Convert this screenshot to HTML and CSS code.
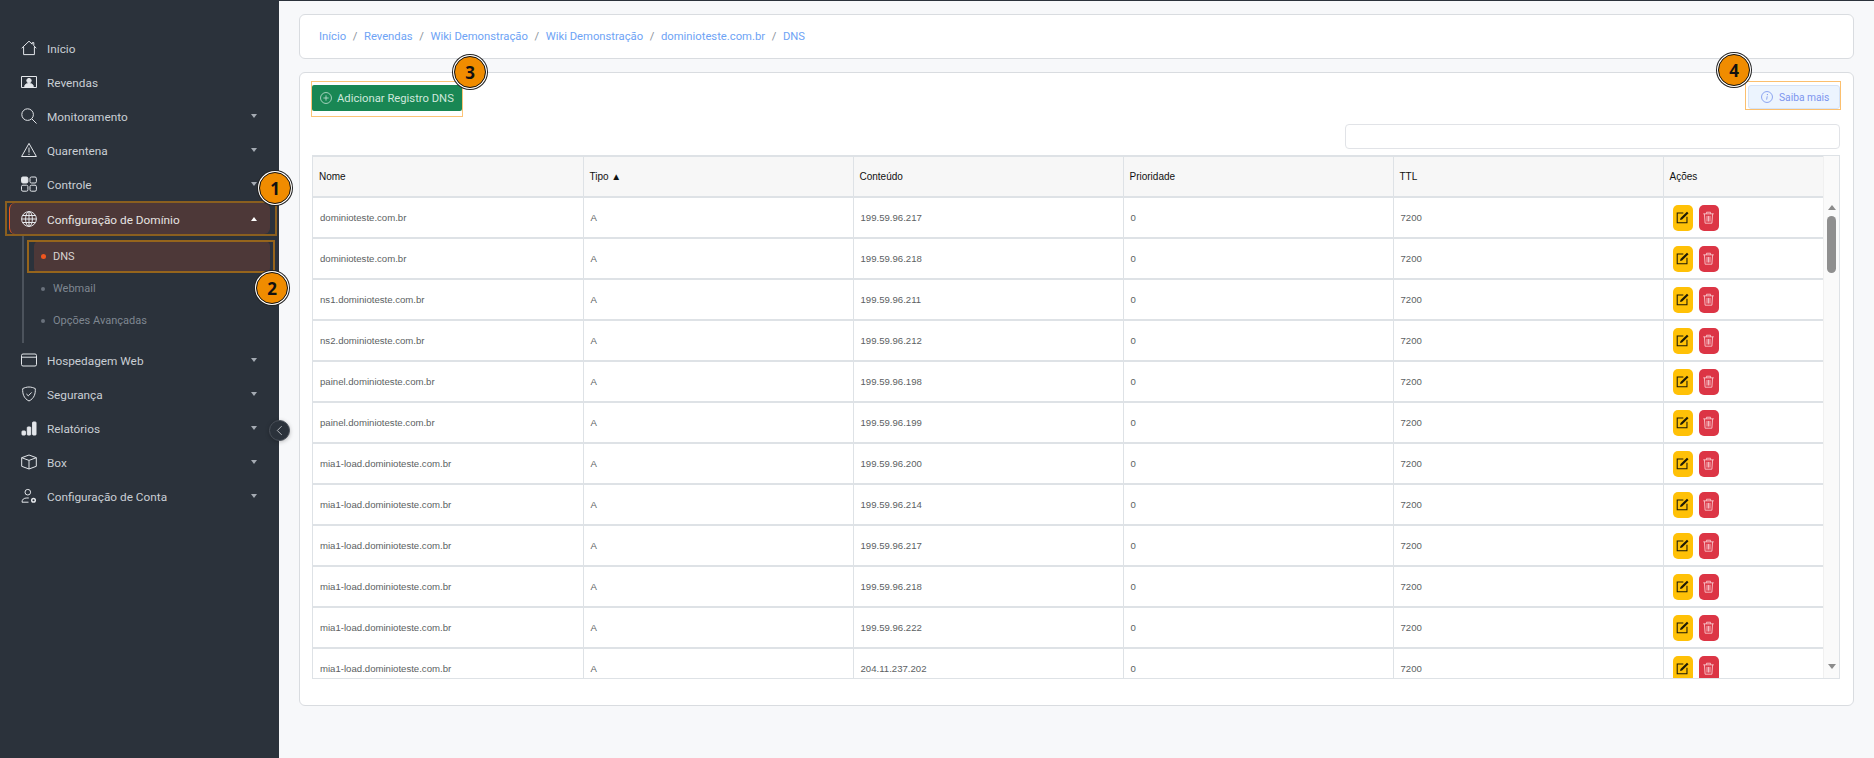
FILE: index.html
```html
<!DOCTYPE html>
<html lang="pt-BR">
<head>
    <meta charset="UTF-8">
    <title>DNS</title>
    <link rel="stylesheet" href="styles.css">
</head>
<body>
    <aside class="sidebar">
        <nav class="menu">
            <a class="menu-item">
                <svg class="icon" viewBox="0 0 16 16"><path d="M.7 8.2 8 1.2l3.2 3V2.6h1.600v3.200l2.500 2.400M2.600 7v7.600h10.800V7"/></svg>
                <span class="label">Início</span>
            </a>
            <a class="menu-item">
                <svg class="icon" viewBox="0 0 16 16"><path d="M.5 2.500h15v11H.5z"/><circle class="solid" cx="8" cy="6.600" r="2.200"/><path class="solid" d="M3.600 12.500c.4-2.400 2.200-3 4.400-3s4 .6 4.400 3z"/></svg>
                <span class="label">Revendas</span>
            </a>
            <a class="menu-item">
                <svg class="icon" viewBox="0 0 16 16"><circle cx="6.600" cy="6.600" r="5.800"/><path d="m10.900 10.900 4.600 4.600"/></svg>
                <span class="label">Monitoramento</span>
                <i class="caret"></i>
            </a>
            <a class="menu-item">
                <svg class="icon" viewBox="0 0 16 16"><path d="M8 1.400.6 14.500h14.800zM8 5.600v5M8 11.800V13"/></svg>
                <span class="label">Quarentena</span>
                <i class="caret"></i>
            </a>
            <a class="menu-item">
                <svg class="icon" viewBox="0 0 16 16"><rect class="solid" x=".5" y="1" width="6.400" height="6" rx="1.400"/><rect x="9" y="1" width="6.400" height="6" rx="1.400"/><rect x=".5" y="9.200" width="6.400" height="6" rx="1.400"/><rect x="9" y="9.200" width="6.400" height="6" rx="1.400"/></svg>
                <span class="label">Controle</span>
                <i class="caret"></i>
            </a>
            <a class="menu-item active">
                <svg class="icon" viewBox="0 0 16 16"><circle cx="8" cy="8" r="7.400"/><ellipse cx="8" cy="8" rx="3.400" ry="7.400"/><path d="M8 .6v14.800M.6 8h14.800M1.700 4.500h12.600M1.700 11.500h12.600"/></svg>
                <span class="label">Configuração de Domínio</span>
                <i class="caret up"></i>
            </a>
            <div class="submenu">
                <a class="sub-item current">DNS</a>
                <a class="sub-item">Webmail</a>
                <a class="sub-item">Opções Avançadas</a>
            </div>
            <a class="menu-item">
                <svg class="icon" viewBox="0 0 16 16"><rect x=".5" y="2" width="15" height="12" rx="1.500"/><path d="M.5 5.200h15"/></svg>
                <span class="label">Hospedagem Web</span>
                <i class="caret"></i>
            </a>
            <a class="menu-item">
                <svg class="icon" viewBox="0 0 16 16"><path d="M8 1C5.800 1 3.500 1.700 1.700 2.600c-.3 5 1 9.800 6.300 12.400 5.300-2.600 6.600-7.400 6.300-12.400C12.500 1.700 10.200 1 8 1z"/><path d="m5.400 8 1.900 1.800 3.400-3.400"/></svg>
                <span class="label">Segurança</span>
                <i class="caret"></i>
            </a>
            <a class="menu-item">
                <svg class="icon" viewBox="0 0 16 16"><rect class="solid" x="1" y="11" width="3.400" height="4" rx=".6"/><rect class="solid" x="6.300" y="7" width="3.400" height="8" rx=".6"/><rect class="solid" x="11.600" y="2" width="3.400" height="13" rx=".6"/></svg>
                <span class="label">Relatórios</span>
                <i class="caret"></i>
            </a>
            <a class="menu-item">
                <svg class="icon" viewBox="0 0 16 16"><path d="M8 1 .7 3.700v8.600L8 15l7.300-2.700V3.700zM.7 3.700 8 6.400l7.300-2.700M8 6.400V15"/></svg>
                <span class="label">Box</span>
                <i class="caret"></i>
            </a>
            <a class="menu-item">
                <svg class="icon" viewBox="0 0 16 16"><circle cx="6.800" cy="4.200" r="2.800"/><path d="M1 14.200c0-2.800 1.800-4.200 4.800-4.200h2M1 14.200h6.500"/><circle cx="12.500" cy="12.300" r="1.800" stroke-width="1.500"/></svg>
                <span class="label">Configuração de Conta</span>
                <i class="caret"></i>
            </a>
        </nav>
    </aside>

    <button class="collapse" type="button">
        <svg viewBox="0 0 8 12"><path d="M6.500 1 1.500 6l5 5"/></svg>
    </button>

    <main class="content">
        <div class="card breadcrumb">
            <a>Início</a><span>/</span>
            <a>Revendas</a><span>/</span>
            <a>Wiki Demonstração</a><span>/</span>
            <a>Wiki Demonstração</a><span>/</span>
            <a>dominioteste.com.br</a><span>/</span>
            <a>DNS</a>
        </div>

        <div class="card panel">
            <div class="toolbar">
                <button class="btn-add" type="button">
                    <svg viewBox="0 0 16 16"><circle cx="8" cy="8" r="7.300"/><path d="M8 4.500v7M4.500 8h7"/></svg>
                    Adicionar Registro DNS
                </button>
                <button class="btn-info" type="button">
                    <svg viewBox="0 0 16 16"><circle cx="8" cy="8" r="7.300"/><path d="M8.300 7 7.500 11.500"/><circle class="dot" cx="8.500" cy="4.800" r=".8"/></svg>
                    Saiba mais
                </button>
            </div>
            <div class="search-row">
                <input class="search" type="text">
            </div>
            <div class="table-box">
                <div class="table-area">
                    <table>
                        <thead>
                            <tr><th>Nome</th><th>Tipo ▲</th><th>Conteúdo</th><th>Prioridade</th><th>TTL</th><th class="actions">Ações</th></tr>
                        </thead>
                        <tbody id="rows"></tbody>
                    </table>
                </div>
                <div class="scrollbar">
                    <i class="arrow-up"></i>
                    <div class="thumb"></div>
                    <i class="arrow-down"></i>
                </div>
            </div>
        </div>
    </main>

    <div class="mark mark-menu"></div>
    <div class="mark mark-sub"></div>
    <div class="mark mark-add"></div>
    <div class="mark mark-info"></div>
    <div class="badge badge-1">1</div>
    <div class="badge badge-2">2</div>
    <div class="badge badge-3">3</div>
    <div class="badge badge-4">4</div>

    <script src="rows.js"></script>
</body>
</html>
```

FILE: rows.js
```js
// registros da zona
const records = [
    ['dominioteste.com.br', '199.59.96.217'],
    ['dominioteste.com.br', '199.59.96.218'],
    ['ns1.dominioteste.com.br', '199.59.96.211'],
    ['ns2.dominioteste.com.br', '199.59.96.212'],
    ['painel.dominioteste.com.br', '199.59.96.198'],
    ['painel.dominioteste.com.br', '199.59.96.199'],
    ['mia1-load.dominioteste.com.br', '199.59.96.200'],
    ['mia1-load.dominioteste.com.br', '199.59.96.214'],
    ['mia1-load.dominioteste.com.br', '199.59.96.217'],
    ['mia1-load.dominioteste.com.br', '199.59.96.218'],
    ['mia1-load.dominioteste.com.br', '199.59.96.222'],
    ['mia1-load.dominioteste.com.br', '204.11.237.202']
];

const editIcon = '<svg viewBox="0 0 16 16"><path class="line" d="M9 2.500H1.500v12h12V7"/><path class="fill" d="M13.500 .8 15.400 2.700 7.500 10.500 5 11 5.500 8.700z"/></svg>';
const trashIcon = '<svg viewBox="0 0 16 16"><path class="line" d="M1.500 3.500h13M5.500 3.500V1.500h5v2M3 3.500l.8 11.500h8.400l.8-11.500M6.200 6v7M8 6v7M9.800 6v7"/></svg>';

const tbody = document.getElementById('rows');
records.forEach(function(record) {
    const tr = document.createElement('tr');
    tr.innerHTML = '<td>' + record[0] + '</td><td>A</td><td>' + record[1] + '</td><td>0</td><td>7200</td>' +
        '<td class="actions"><span class="btn-edit">' + editIcon + '</span><span class="btn-delete">' + trashIcon + '</span></td>';
    tbody.appendChild(tr);
});
```

FILE: styles.css
```css
* {
    box-sizing: border-box;
}
html, body {
    height: 100%;
}
body {
    margin: 0;
    display: flex;
    overflow: hidden;
    background-color: #f7f8fa;
    font-family: "Liberation Sans", Arial, sans-serif;
}

/* sidebar */
.sidebar {
    width: 279px;
    flex-shrink: 0;
    background-color: #2b323b;
    font-family: Roboto, Arial, sans-serif;
}
.menu {
    padding-top: 31px;
}
.menu-item {
    display: flex;
    align-items: center;
    height: 34px;
    padding: 0 21px;
    color: #c9ced4;
    font-size: 11.8px;
}
.menu-item .icon {
    width: 16px;
    height: 16px;
    margin-right: 10px;
    fill: none;
    stroke: #e3e6ea;
    stroke-width: 1;
    flex-shrink: 0;
}
.icon .solid {
    fill: #e3e6ea;
}
.menu-item .label {
    flex: 1;
    padding-top: 2px;
}
.caret {
    width: 0;
    height: 0;
    border-left: 3.5px solid transparent;
    border-right: 3.5px solid transparent;
    border-top: 4px solid #a5abb3;
    margin-right: 1px;
}
.caret.up {
    border-top: none;
    border-bottom: 4px solid #ffffff;
}
.menu-item.active {
    background-color: #4d3838;
    color: #e6e3e1;
    margin: 2px 9px 1px 9px;
    height: 31px;
    padding: 0 12px 0 11px;
    border-left: 1px solid #f0561e;
    border-radius: 6px;
}
.submenu {
    margin-left: 22px;
    padding: 6px 0;
    border-left: 2px solid #4c535c;
    height: 108px;
}
.sub-item {
    display: flex;
    align-items: center;
    height: 32px;
    margin: 0 9px 0 10px;
    padding-left: 19px;
    padding-bottom: 1px;
    position: relative;
    color: #7f8791;
    font-size: 11px;
    border-radius: 5px;
}
.sub-item::before {
    content: "";
    position: absolute;
    left: 7px;
    top: 14px;
    width: 4px;
    height: 4px;
    border-radius: 50%;
    background-color: #69717b;
}
.sub-item.current {
    background-color: #4d3838;
    color: #d8d4d2;
}
.sub-item.current::before {
    left: 7px;
    top: 13px;
    width: 5px;
    height: 5px;
    background-color: #f0561e;
}
.collapse {
    position: absolute;
    left: 269px;
    top: 420px;
    width: 21px;
    height: 21px;
    padding: 0;
    border: 1px solid #4a5059;
    border-radius: 50%;
    background-color: #2b323b;
    display: flex;
    align-items: center;
    justify-content: center;
    box-shadow: 0 1px 4px rgba(0,0,0,0.25);
}
.collapse svg {
    width: 7px;
    height: 11px;
    fill: none;
    stroke: #c3c7cc;
    stroke-width: 1;
}

/* content */
.content {
    flex: 1;
    min-width: 0;
    border-top: 1px solid #2b323b;
    padding: 13px 20px 0 20px;
}
.card {
    background-color: white;
    border: 1px solid #d9dce0;
    border-radius: 6px;
}
.breadcrumb {
    height: 45px;
    padding: 0 0 0 19px;
    display: flex;
    align-items: center;
    gap: 6px;
    font-family: Roboto, Arial, sans-serif;
    font-size: 11.25px;
    color: #8c939b;
}
.breadcrumb a {
    color: #6ea3f5;
}
.breadcrumb span {
    margin: 0 .6px;
}
.panel {
    height: 634px;
    margin-top: 13px;
    padding: 12px 13px 0 12px;
}
.toolbar {
    display: flex;
    justify-content: space-between;
    align-items: flex-start;
}
.btn-add {
    display: flex;
    align-items: center;
    gap: 5px;
    width: 150px;
    height: 26px;
    padding: 0 0 0 8px;
    border: none;
    border-radius: 2px;
    background-color: #198754;
    color: #cfe8dc;
    font-family: Roboto, Arial, sans-serif;
    font-size: 11.25px;
    white-space: nowrap;
}
.btn-add svg {
    width: 12px;
    height: 12px;
    fill: none;
    stroke: #cfe8dc;
    flex-shrink: 0;
}
.btn-info {
    display: flex;
    align-items: center;
    gap: 6px;
    width: 92px;
    height: 24px;
    padding: 0 0 0 12px;
    border: 1px solid #d5e3f7;
    border-radius: 3px;
    background-color: #ecf4fe;
    color: #7d94ef;
    font-family: Roboto, Arial, sans-serif;
    font-size: 10.25px;
    white-space: nowrap;
}
.btn-info svg {
    width: 12px;
    height: 12px;
    fill: none;
    stroke: #6f8cec;
    flex-shrink: 0;
}
.btn-info .dot {
    fill: #6f8cec;
    stroke: none;
}
.search-row {
    display: flex;
    justify-content: flex-end;
    margin-top: 13px;
}
.search {
    width: 495px;
    height: 25px;
    border: 1px solid #e1e3e7;
    border-radius: 4px;
    background-color: white;
}

/* tabela */
.table-box {
    display: flex;
    height: 524px;
    margin-top: 6px;
    border: 1px solid #dee2e6;
    overflow: hidden;
}
.table-area {
    flex: 1;
    min-width: 0;
    overflow: hidden;
}
table {
    width: 1511px;
    table-layout: fixed;
    border-collapse: collapse;
}
th, td {
    width: 270px;
    height: 41px;
    padding: 0 0 0 7px;
    border-right: 1px solid #dee2e6;
    border-bottom: 2px solid #dee2e6;
    text-align: left;
    font-size: 9.6px;
    font-weight: normal;
}
th {
    height: 40px;
    padding-left: 6px;
    background-color: #f7f7f7;
    color: #111;
    font-size: 10px;
    border-top: 1px solid #dee2e6;
}
td {
    color: #5c5f63;
}
th.actions, td.actions {
    width: 161px;
    border-right: none;
}
td.actions {
    padding: 1px 0 0 9px;
    font-size: 0;
}
.btn-edit, .btn-delete {
    display: inline-flex;
    align-items: center;
    justify-content: center;
    width: 20px;
    height: 26px;
    border-radius: 5px;
    vertical-align: middle;
}
.btn-edit {
    background-color: #ffc107;
    margin-right: 6px;
}
.btn-delete {
    background-color: #dc3545;
}
.btn-edit svg, .btn-delete svg {
    width: 13px;
    height: 13px;
    fill: none;
}
.btn-edit .line {
    stroke: #1e1a06;
    stroke-width: 1.300;
}
.btn-edit .fill {
    fill: #1e1a06;
}
.btn-delete .line {
    stroke: #f6bcc2;
    stroke-width: 1.200;
}
.scrollbar {
    width: 16px;
    flex-shrink: 0;
    display: flex;
    flex-direction: column;
    align-items: center;
    background-color: #fafafa;
    border-left: 1px solid #f0f0f0;
    padding-top: 49px;
}
.arrow-up, .arrow-down {
    width: 0;
    height: 0;
    border-left: 4.500px solid transparent;
    border-right: 4.500px solid transparent;
}
.arrow-up {
    border-bottom: 5px solid #8c8c8c;
}
.arrow-down {
    border-top: 5px solid #8c8c8c;
    margin-top: auto;
    margin-bottom: 9px;
}
.thumb {
    width: 9px;
    height: 57px;
    margin-top: 6px;
    border-radius: 5px;
    background-color: #8f8f8f;
}

/* anotacoes do tutorial */
.mark {
    position: absolute;
    pointer-events: none;
}
.mark-menu {
    left: 5px;
    top: 201px;
    width: 272px;
    height: 35px;
    border: 2px solid #8a5f1f;
}
.mark-sub {
    left: 27px;
    top: 240px;
    width: 248px;
    height: 33px;
    border: 2px solid #96651c;
}
.mark-add {
    left: 311px;
    top: 81px;
    width: 152px;
    height: 36px;
    border: 1px solid #fcc477;
}
.mark-info {
    left: 1745px;
    top: 81px;
    width: 96px;
    height: 29px;
    border: 1px solid #fbbf6e;
}
.badge {
    position: absolute;
    width: 32px;
    height: 32px;
    display: flex;
    align-items: center;
    justify-content: center;
    border-radius: 50%;
    background-color: #f08c00;
    color: #111;
    font-family: "Open Sans", Arial, sans-serif;
    font-size: 17px;
    font-weight: bold;
    border: 1px solid #111;
    box-shadow: 0 0 0 1px white, 0 0 0 2px #222;
}
.badge-1 { left: 259px; top: 172px; }
.badge-2 { left: 256px; top: 272px; }
.badge-3 { left: 454px; top: 56px; }
.badge-4 { left: 1718px; top: 54px; }
```
